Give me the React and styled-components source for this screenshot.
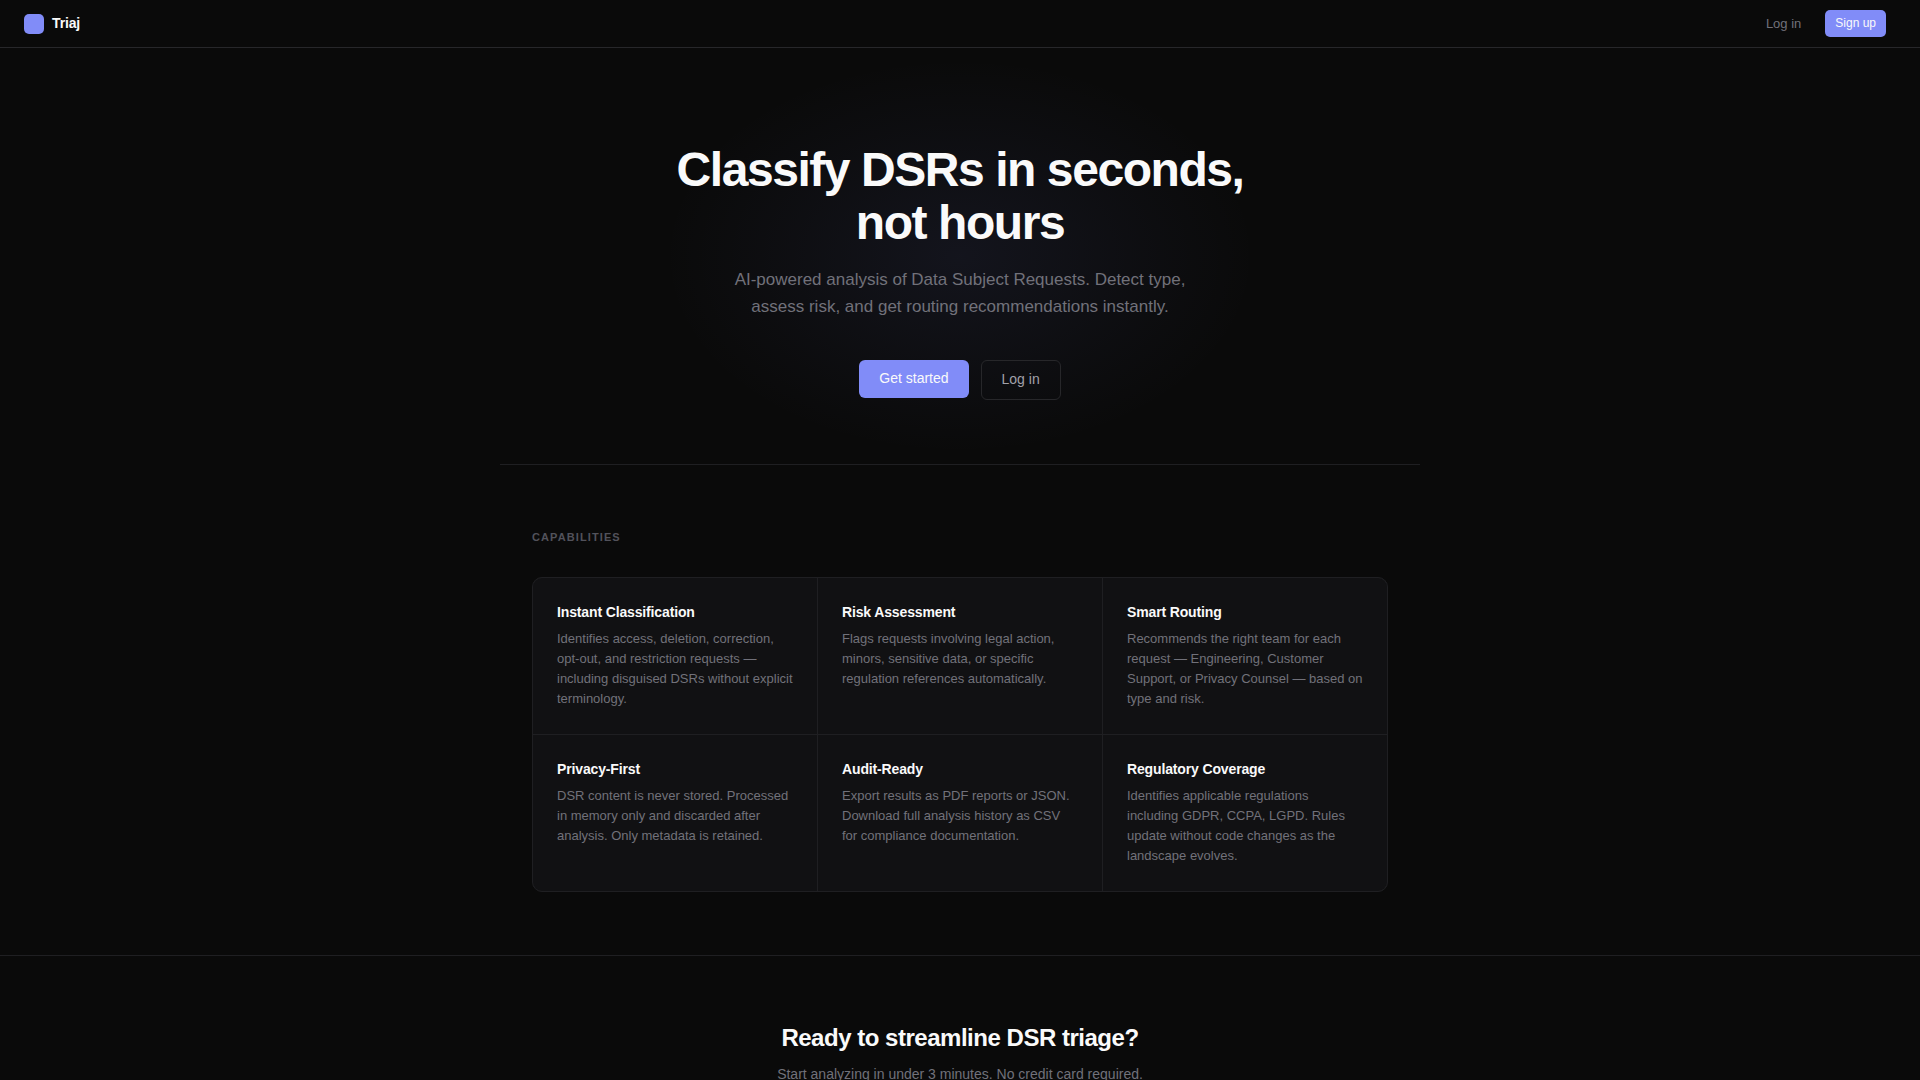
import React from 'react';
import styled, { createGlobalStyle } from 'styled-components';

const features = [
    {
        title: 'Instant Classification',
        text: 'Identifies access, deletion, correction, opt-out, and restriction requests — including disguised DSRs without explicit terminology.',
    },
    {
        title: 'Risk Assessment',
        text: 'Flags requests involving legal action, minors, sensitive data, or specific regulation references automatically.',
    },
    {
        title: 'Smart Routing',
        text: 'Recommends the right team for each request — Engineering, Customer Support, or Privacy Counsel — based on type and risk.',
    },
    {
        title: 'Privacy-First',
        text: 'DSR content is never stored. Processed in memory only and discarded after analysis. Only metadata is retained.',
    },
    {
        title: 'Audit-Ready',
        text: 'Export results as PDF reports or JSON. Download full analysis history as CSV for compliance documentation.',
    },
    {
        title: 'Regulatory Coverage',
        text: 'Identifies applicable regulations including GDPR, CCPA, LGPD. Rules update without code changes as the landscape evolves.',
    },
];

const App = () => {
    return (
        <>
            <GlobalStyle />
            <NavBar>
                <Brand href="#">
                    <Logo />
                    Triaj
                </Brand>
                <NavLinks>
                    <NavLink href="#login">Log in</NavLink>
                    <SignUp href="#signup">Sign up</SignUp>
                </NavLinks>
            </NavBar>

            <main>
                <Hero>
                    <Title>Classify DSRs in seconds,<br />not hours</Title>
                    <Subtitle>
                        AI-powered analysis of Data Subject Requests. Detect type,
                        assess risk, and get routing recommendations instantly.
                    </Subtitle>
                    <Actions>
                        <Button href="#signup" $primary>Get started</Button>
                        <Button href="#login">Log in</Button>
                    </Actions>
                </Hero>

                <Capabilities>
                    <Label>Capabilities</Label>
                    <Grid>
                        {features.map(({ title, text }) => (
                            <Card key={ title }>
                                <CardTitle>{ title }</CardTitle>
                                <CardText>{ text }</CardText>
                            </Card>
                        ))}
                    </Grid>
                </Capabilities>

                <Cta>
                    <CtaTitle>Ready to streamline DSR triage?</CtaTitle>
                    <CtaText>Start analyzing in under 3 minutes. No credit card required.</CtaText>
                </Cta>
            </main>
        </>
    );
}


const GlobalStyle = createGlobalStyle`
    * {
        box-sizing: border-box;
        margin: 0;
    }

    body {
        background-color: #0a0a0a;
        color: #fafafa;
        font-family: 'Liberation Sans', Arial, sans-serif;
        -webkit-font-smoothing: antialiased;
    }

    a {
        text-decoration: none;
    }
`;

const NavBar = styled.nav`
    display: flex;
    align-items: center;
    justify-content: space-between;
    height: 48px;
    padding: 0 34px 0 24px;
    border-bottom: 1px solid #27272a;
`;

const Brand = styled.a`
    display: flex;
    align-items: center;
    gap: 8px;
    font-size: 14px;
    line-height: 21px;
    font-weight: 600;
    letter-spacing: -0.01em;
    color: #fafafa;
`;

const Logo = styled.span`
    width: 20px;
    height: 20px;
    border-radius: 5px;
    background-color: #818cf8;
`;

const NavLinks = styled.div`
    display: flex;
    align-items: center;
    gap: 24px;
`;

const NavLink = styled.a`
    font-size: 13px;
    color: #71717a;

    &:hover {
        color: #fafafa;
    }
`;

const SignUp = styled.a`
    padding: 6px 10px;
    border-radius: 5px;
    background-color: #818cf8;
    font-size: 12px;
    line-height: 15px;
    font-weight: 500;
    color: #fafafa;
`;

const Hero = styled.section`
    max-width: 920px;
    margin: 0 auto;
    padding: 95px 32px 64px;
    border-bottom: 1px solid #1f1f22;
    text-align: center;
    /* soft glow behind the headline */
    background: radial-gradient(ellipse, rgba(129, 140, 248, 0.08) 0%, transparent 70%) center / 600px 400px no-repeat;
`;

const Title = styled.h1`
    font-size: 48px;
    line-height: 53px;
    font-weight: 600;
    letter-spacing: -0.03em;
`;

const Subtitle = styled.p`
    max-width: 480px;
    margin: 17px auto 40px;
    font-size: 17px;
    line-height: 27px;
    color: #71717a;
`;

const Actions = styled.div`
    display: flex;
    align-items: flex-start;
    justify-content: center;
    gap: 12px;
`;

const Button = styled.a`
    padding: 10px 20px 12px;
    border: ${({ $primary }) => ($primary ? 'none' : '1px solid #27272a')};
    border-radius: 6px;
    background-color: ${({ $primary }) => ($primary ? '#818cf8' : 'transparent')};
    font-size: 14px;
    line-height: 16px;
    font-weight: 500;
    color: ${({ $primary }) => ($primary ? '#fafafa' : '#a1a1aa')};
`;

const Capabilities = styled.section`
    max-width: 920px;
    margin: 0 auto;
    padding: 64px 32px 63px;
`;

const Label = styled.h2`
    margin-bottom: 32px;
    font-size: 11px;
    line-height: 16px;
    font-weight: 600;
    letter-spacing: 0.1em;
    text-transform: uppercase;
    color: #52525b;
`;

/* the 1px gaps let the background through as dividers */
const Grid = styled.div`
    display: grid;
    grid-template-columns: repeat(3, 1fr);
    gap: 1px;
    border: 1px solid #1f1f22;
    border-radius: 10px;
    background-color: #1f1f22;
    overflow: hidden;
`;

const Card = styled.article`
    padding: 26px 24px 25px;
    background-color: #111113;
`;

const CardTitle = styled.h3`
    margin-bottom: 9px;
    font-size: 14px;
    line-height: 16px;
    font-weight: 600;
    letter-spacing: -0.01em;
`;

const CardText = styled.p`
    font-size: 13px;
    line-height: 20px;
    color: #71717a;
`;

const Cta = styled.section`
    padding: 64px 32px;
    border-top: 1px solid #1f1f22;
    text-align: center;
`;

const CtaTitle = styled.h2`
    margin-bottom: 8px;
    font-size: 24px;
    line-height: 36px;
    font-weight: 600;
    letter-spacing: -0.02em;
`;

const CtaText = styled.p`
    font-size: 14px;
    line-height: 20px;
    color: #71717a;
`;

export default App;
